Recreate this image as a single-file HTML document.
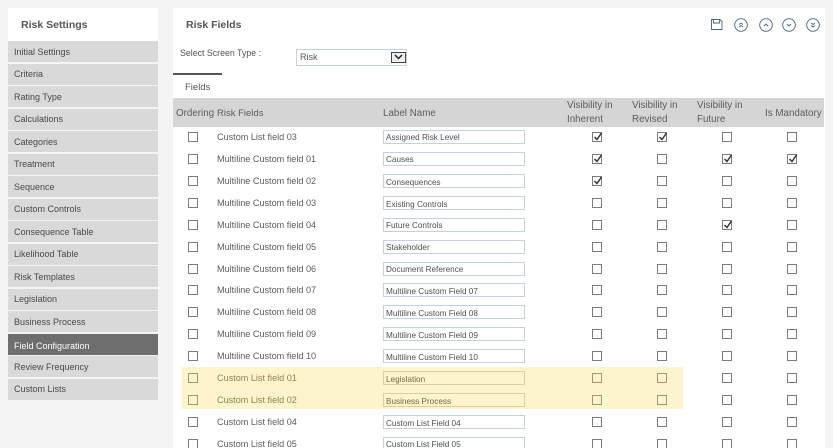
<!DOCTYPE html>
<html>
<head>
<meta charset="utf-8">
<style>
html,body{margin:0;padding:0}
body{width:833px;height:448px;overflow:hidden;background:#f4f4f4;position:relative;font-family:"Liberation Sans",sans-serif;font-size:9px;color:#555}
div,span,svg{position:absolute;white-space:nowrap;box-sizing:border-box}
.m{left:8px;width:150px;height:21px;background:#d9d9d9;color:#484848;line-height:21px;padding-left:6px;font-size:9px}
.o{line-height:23px}
.r{left:173px;width:651px;height:20px;background:#fff}
.t{left:44px;top:3px;line-height:14px;color:#5c5c5c;font-size:9.1px}
.i{left:210px;top:3px;width:142px;height:14px;border:1px solid #c5d0da;background:#fff;line-height:14px;padding-left:2px;font-size:8.2px;color:#505050}
.d{line-height:16px}
.c{top:5px;width:10px;height:10px;border:1px solid #7c7c7c;background:#fff}
.c1{left:15px}.c2{left:419px}.c3{left:484px}.c4{left:549px}.c5{left:614px}
.k svg{left:0;top:-1px;width:10px;height:10px}
.h{line-height:14px;color:#5c5c5c;font-size:9.8px}
.y .t{color:#948a5c}
.y .i{color:#77714f;border-color:#d8d8cc}
.y .c{border-color:#a3a08f}
</style>
</head>
<body>
<div style="left:8px;top:8px;width:150px;height:33px;background:#fff"></div>
<div style="left:21px;top:18px;font-size:10.5px;font-weight:bold;color:#555;line-height:14px">Risk Settings</div>
<div class="m o" style="top:41px">Initial Settings</div>
<div class="m" style="top:64px">Criteria</div>
<div class="m o" style="top:86px">Rating Type</div>
<div class="m" style="top:109px">Calculations</div>
<div class="m o" style="top:131px">Categories</div>
<div class="m" style="top:154px">Treatment</div>
<div class="m o" style="top:176px">Sequence</div>
<div class="m" style="top:199px">Custom Controls</div>
<div class="m o" style="top:221px">Consequence Table</div>
<div class="m" style="top:244px">Likelihood Table</div>
<div class="m o" style="top:266px">Risk Templates</div>
<div class="m" style="top:289px">Legislation</div>
<div class="m o" style="top:311px">Business Process</div>
<div class="m" style="top:334px;background:#6e6e6e;color:#fff;line-height:25px">Field Configuration</div>
<div class="m o" style="top:356px">Review Frequency</div>
<div class="m" style="top:379px">Custom Lists</div>

<div style="left:173px;top:8px;width:652px;height:440px;background:#fff"></div>
<div style="left:186px;top:18px;font-size:10.5px;font-weight:bold;color:#555;line-height:14px">Risk Fields</div>

<svg style="left:711px;top:19px" width="12" height="11" viewBox="0 0 12 11" fill="none" stroke="#4a6478" stroke-width=".9"><path d="M.5.5H9L11 2.500V10.500H.5Z"/><path d="M2.500.5V4H8.500V.5"/></svg>
<svg style="left:734px;top:18px" width="14" height="14" viewBox="0 0 14 14" fill="none" stroke="#4a6478" stroke-width=".9"><circle cx="7" cy="7" r="6.300"/><path d="M5 6.500L7 5L9 6.500M5 9L7 7.500L9 9"/></svg>
<svg style="left:759px;top:18px" width="14" height="14" viewBox="0 0 14 14" fill="none" stroke="#4a6478" stroke-width=".9"><circle cx="7" cy="7" r="6.300"/><path d="M5 8L7 6L9 8"/></svg>
<svg style="left:782px;top:18px" width="14" height="14" viewBox="0 0 14 14" fill="none" stroke="#4a6478" stroke-width=".9"><circle cx="7" cy="7" r="6.300"/><path d="M5 6L7 8L9 6"/></svg>
<svg style="left:806px;top:18px" width="14" height="14" viewBox="0 0 14 14" fill="none" stroke="#4a6478" stroke-width=".9"><circle cx="7" cy="7" r="6.300"/><path d="M5 5L7 6.500L9 5M5 7.500L7 9L9 7.500"/></svg>

<div style="left:180px;top:46px;line-height:14px;color:#555;font-size:8.8px">Select Screen Type :</div>
<div style="left:296px;top:49px;width:111px;height:17px;border:1px solid #c5d0da;background:#fff;line-height:15px;padding-left:3px;font-size:9px;color:#555">Risk</div>
<div style="left:391px;top:52px;width:15px;height:11px;border:1px solid #444;background:#eee"></div>
<svg style="left:394px;top:53px" width="9" height="8" viewBox="0 0 9 8" fill="none" stroke="#222" stroke-width="1.500"><path d="M1 2L4.500 5.500L8 2"/></svg>

<div style="left:173px;top:73px;width:49px;height:2px;background:#555"></div>
<div style="left:185px;top:81px;line-height:14px;font-size:9.5px;color:#555">Fields</div>

<div style="left:173px;top:98px;width:651px;height:29px;background:#d5d5d5"></div>
<div class="h" style="left:176px;top:107px">Ordering</div>
<div class="h" style="left:217px;top:107px;font-size:9.5px">Risk Fields</div>
<div class="h" style="left:383px;top:107px">Label Name</div>
<div class="h" style="left:567px;top:99px">Visibility in</div>
<div class="h" style="left:567px;top:113px">Inherent</div>
<div class="h" style="left:632px;top:99px">Visibility in</div>
<div class="h" style="left:632px;top:113px">Revised</div>
<div class="h" style="left:697px;top:99px">Visibility in</div>
<div class="h" style="left:697px;top:113px">Future</div>
<div class="h" style="left:765px;top:107px">Is Mandatory</div>

<div class="r" style="top:127px"><div class="c c1"></div><div class="t">Custom List field 03</div><div class="i">Assigned Risk Level</div><div class="c c2 k"><svg viewBox="0 0 10 10"><path d="M1.500 5L4 7.500L8.500 1" fill="none" stroke="#333" stroke-width="1.500"/></svg></div><div class="c c3 k"><svg viewBox="0 0 10 10"><path d="M1.500 5L4 7.500L8.500 1" fill="none" stroke="#333" stroke-width="1.500"/></svg></div><div class="c c4"></div><div class="c c5"></div></div>
<div class="r" style="top:149px"><div class="c c1"></div><div class="t">Multiline Custom field 01</div><div class="i">Causes</div><div class="c c2 k"><svg viewBox="0 0 10 10"><path d="M1.500 5L4 7.500L8.500 1" fill="none" stroke="#333" stroke-width="1.500"/></svg></div><div class="c c3"></div><div class="c c4 k"><svg viewBox="0 0 10 10"><path d="M1.500 5L4 7.500L8.500 1" fill="none" stroke="#333" stroke-width="1.500"/></svg></div><div class="c c5 k"><svg viewBox="0 0 10 10"><path d="M1.500 5L4 7.500L8.500 1" fill="none" stroke="#333" stroke-width="1.500"/></svg></div></div>
<div class="r" style="top:171px"><div class="c c1"></div><div class="t">Multiline Custom field 02</div><div class="i d">Consequences</div><div class="c c2 k"><svg viewBox="0 0 10 10"><path d="M1.500 5L4 7.500L8.500 1" fill="none" stroke="#333" stroke-width="1.500"/></svg></div><div class="c c3"></div><div class="c c4"></div><div class="c c5"></div></div>
<div class="r" style="top:193px"><div class="c c1"></div><div class="t">Multiline Custom field 03</div><div class="i d">Existing Controls</div><div class="c c2"></div><div class="c c3"></div><div class="c c4"></div><div class="c c5"></div></div>
<div class="r" style="top:215px"><div class="c c1"></div><div class="t">Multiline Custom field 04</div><div class="i">Future Controls</div><div class="c c2"></div><div class="c c3"></div><div class="c c4 k"><svg viewBox="0 0 10 10"><path d="M1.500 5L4 7.500L8.500 1" fill="none" stroke="#333" stroke-width="1.500"/></svg></div><div class="c c5"></div></div>
<div class="r" style="top:237px"><div class="c c1"></div><div class="t">Multiline Custom field 05</div><div class="i">Stakeholder</div><div class="c c2"></div><div class="c c3"></div><div class="c c4"></div><div class="c c5"></div></div>
<div class="r" style="top:259px"><div class="c c1"></div><div class="t">Multiline Custom field 06</div><div class="i">Document Reference</div><div class="c c2"></div><div class="c c3"></div><div class="c c4"></div><div class="c c5"></div></div>
<div class="r" style="top:280px"><div class="c c1"></div><div class="t">Multiline Custom field 07</div><div class="i d">Multiline Custom Field 07</div><div class="c c2"></div><div class="c c3"></div><div class="c c4"></div><div class="c c5"></div></div>
<div class="r" style="top:302px"><div class="c c1"></div><div class="t">Multiline Custom field 08</div><div class="i d">Multiline Custom Field 08</div><div class="c c2"></div><div class="c c3"></div><div class="c c4"></div><div class="c c5"></div></div>
<div class="r" style="top:324px"><div class="c c1"></div><div class="t">Multiline Custom field 09</div><div class="i d">Multiline Custom Field 09</div><div class="c c2"></div><div class="c c3"></div><div class="c c4"></div><div class="c c5"></div></div>
<div class="r" style="top:346px"><div class="c c1"></div><div class="t">Multiline Custom field 10</div><div class="i d">Multiline Custom Field 10</div><div class="c c2"></div><div class="c c3"></div><div class="c c4"></div><div class="c c5"></div></div>
<div class="r y" style="top:368px"><div class="c c1"></div><div class="t">Custom List field 01</div><div class="i d">Legislation</div><div class="c c2"></div><div class="c c3"></div><div class="c c4" style="border-color:#7c7c7c"></div><div class="c c5" style="border-color:#7c7c7c"></div></div>
<div class="r y" style="top:390px"><div class="c c1"></div><div class="t">Custom List field 02</div><div class="i d">Business Process</div><div class="c c2"></div><div class="c c3"></div><div class="c c4" style="border-color:#7c7c7c"></div><div class="c c5" style="border-color:#7c7c7c"></div></div>
<div class="r" style="top:412px"><div class="c c1"></div><div class="t">Custom List field 04</div><div class="i d">Custom List Field 04</div><div class="c c2"></div><div class="c c3"></div><div class="c c4"></div><div class="c c5"></div></div>
<div class="r" style="top:434px;height:14px;overflow:hidden"><div class="c c1"></div><div class="t">Custom List field 05</div><div class="i">Custom List Field 05</div><div class="c c2"></div><div class="c c3"></div><div class="c c4"></div><div class="c c5"></div></div>

<div style="left:182px;top:367px;width:501px;height:42px;background:#fdf3cd;mix-blend-mode:multiply"></div>
</body>
</html>
